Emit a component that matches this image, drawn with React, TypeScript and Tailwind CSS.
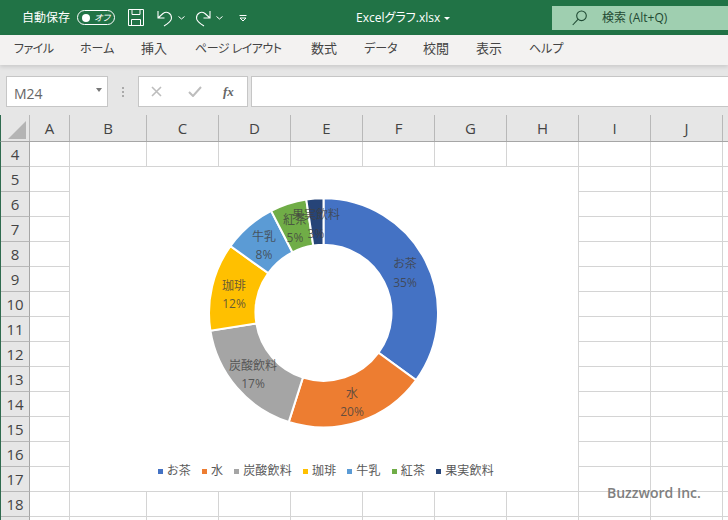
const cols: [string, number][] = [["A",40],["B",77],["C",72],["D",72],["E",72],["F",72],["G",72],["H",72],["I",72],["J",72],["",6]];
const rows = [4,5,6,7,8,9,10,11,12,13,14,15,16,17,18,""];
const menu: [string, string, string][] = [
  ["ファイル","w-[38px]","text-[12px] tracking-[-0.5px]"],
  ["ホーム","w-[33px]","text-[12px]"],
  ["挿入","w-[26px]","text-[13px]"],
  ["ページ レイアウト","w-[88px]","text-[12px] tracking-[-0.5px]"],
  ["数式","w-[25px]","text-[13px]"],
  ["データ","w-[31px]","text-[12px]"],
  ["校閲","w-[25px]","text-[13px]"],
  ["表示","w-[25px]","text-[13px]"],
  ["ヘルプ","w-[32px]","text-[12px]"],
];
const TOP = 167, LEFT = 70;
const slices = [
  { name: "お茶", v: 35, a: 35, c: "#4472c4", lx: 405, ny: 264, py: 283 },
  { name: "水", v: 20, a: 19.9, c: "#ed7d31", lx: 352, ny: 394, py: 412 },
  { name: "炭酸飲料", v: 17, a: 17.6, c: "#a5a5a5", lx: 253, ny: 366, py: 384 },
  { name: "珈琲", v: 12, a: 12.4, c: "#ffc000", lx: 234, ny: 286, py: 304 },
  { name: "牛乳", v: 8, a: 7.55, c: "#5b9bd5", lx: 264, ny: 237, py: 255 },
  { name: "紅茶", v: 5, a: 5.15, c: "#70ad47", lx: 295, ny: 220, py: 238 },
  { name: "果実飲料", v: 3, a: 2.4, c: "#264478", lx: 316, ny: 215, py: 234 },
];
const cx = 323.5 - LEFT, cy = 312.8 - TOP, R = 114.5, r = 68;
function arc(a0: number, a1: number) {
  const p = (rad: number, a: number) => `${(cx + rad * Math.sin(a)).toFixed(2)} ${(cy - rad * Math.cos(a)).toFixed(2)}`;
  const large = a1 - a0 > Math.PI ? 1 : 0;
  return `M${p(R, a0)}A${R} ${R} 0 ${large} 1 ${p(R, a1)}L${p(r, a1)}A${r} ${r} 0 ${large} 0 ${p(r, a0)}Z`;
}
let acc = 0;
const arcs = slices.map((s) => {
  const a0 = (acc / 100) * Math.PI * 2;
  acc += s.a;
  const a1 = (acc / 100) * Math.PI * 2;
  return { ...s, d: arc(a0, a1) };
});
const palt = "[font-feature-settings:'palt']";

export default function App() {
  return (
    <div className={`w-[728px] h-[520px] overflow-hidden relative bg-white flex flex-col [font-family:'Open_Sans','Noto_Sans_CJK_JP',sans-serif] ${palt}`}>
      {/* title bar */}
      <div className="h-[35px] shrink-0 bg-[#217346] flex items-center text-white relative">
        <span className="ml-[22px] w-[48px] text-[12px] whitespace-nowrap">自動保存</span>
        <div className="ml-[7px] w-[38px] h-[15px] rounded-full border border-white flex items-center justify-between pl-[4px] pr-[4px]">
          <span className="w-[8px] h-[8px] rounded-full bg-white" />
          <span className="text-[9px] leading-none italic">オフ</span>
        </div>
        <svg className="ml-[13px]" width="16" height="17" viewBox="0 0 16 17" fill="none" stroke="white" strokeWidth="1">
          <path d="M.5.5h15v16H.5zM4 .5v5h8v-5M3.5 16.5v-6h9v6" />
        </svg>
        <svg className="ml-[12px] mt-[2px]" width="17" height="18" viewBox="0 0 17 18" fill="none" stroke="white" strokeWidth="1.1">
          <path d="M2 1v7h6.5M2 8L7 3.5C11 .5 15.5 3.5 15.5 8 15.5 11 13 13 8 16" />
        </svg>
        <svg className="ml-[5px]" width="7" height="4" viewBox="0 0 7 4" fill="none" stroke="white"><path d="M.5.5l3 2.5 3-2.5" /></svg>
        <svg className="ml-[10px] mt-[2px]" width="17" height="18" viewBox="0 0 17 18" fill="none" stroke="white" strokeWidth="1.1">
          <path d="M15 1v7H8.5M15 8L10 3.5C6 .5 1.5 3.5 1.5 8 1.5 11 4 13 9 16" />
        </svg>
        <svg className="ml-[4px]" width="7" height="4" viewBox="0 0 7 4" fill="none" stroke="white"><path d="M.5.5l3 2.5 3-2.5" /></svg>
        <svg className="ml-[16px]" width="8" height="8" viewBox="0 0 8 8" fill="none" stroke="white"><path d="M.5 1.5h7M1 4l3 3 3-3z" /></svg>
        <span className="absolute left-[356px] top-[9px] text-[12px] leading-[17px] whitespace-nowrap">Excelグラフ.xlsx</span>
        <span className="absolute left-[444px] top-[17px] w-0 h-0 border-x-[3px] border-x-transparent border-t-[3px] border-t-white" />
        <div className="absolute left-[552px] top-[6px] right-0 h-[24px] bg-[#9fcfb0] flex items-center text-[#1f4a33]">
          <svg className="ml-[20px]" width="15" height="16" viewBox="0 0 15 16" fill="none" stroke="#1f4a33" strokeWidth="1.1">
            <circle cx="9.5" cy="5.8" r="4.8" /><path d="M6 9.3L.7 15" />
          </svg>
          <span className="ml-[15px] text-[12px] whitespace-nowrap">検索 (Alt+Q)</span>
        </div>
      </div>
      {/* menu */}
      <div className="h-[30px] shrink-0 bg-[#f3f2f1] flex items-center pl-[14px] gap-x-[28px] text-[#444] pb-[2px] relative z-10 shadow-[0_2px_4px_rgba(0,0,0,0.12)]">
        {menu.map(([t, w, f]) => (
          <span key={t} className={`${w} ${f} whitespace-nowrap`}>{t}</span>
        ))}
      </div>
      {/* formula bar */}
      <div className="h-[50px] shrink-0 bg-[#e6e6e6] flex items-start pt-[11px] pl-[6px]">
        <div className="w-[102px] h-[31px] bg-white border border-[#c6c6c6] flex items-center justify-between pl-[7px] pr-[5px] text-[14px] text-[#666]">
          <span className="mt-[3px]">M24</span>
          <span className="w-0 h-0 mb-[3px] border-x-[3.5px] border-x-transparent border-t-[4px] border-t-[#777]" />
        </div>
        <div className="w-[30px] h-[31px] flex flex-col items-center justify-center gap-[2px]">
          {[0,1,2].map((i) => <span key={i} className="w-[2px] h-[2px] bg-[#aaa]" />)}
        </div>
        <div className="w-[110px] h-[31px] bg-white border border-[#c6c6c6] flex items-center text-[#bbb]">
          <svg className="ml-[12px]" width="11" height="11" viewBox="0 0 11 11" stroke="#bdbdbd" strokeWidth="1.6"><path d="M1 1l9 9M10 1l-9 9" /></svg>
          <svg className="ml-[26px]" width="14" height="11" viewBox="0 0 14 11" fill="none" stroke="#bdbdbd" strokeWidth="2"><path d="M1 6l4 4 8-9" /></svg>
          <span className="ml-[21px] text-[13px] italic font-bold text-[#666] [font-family:'Liberation_Serif',serif]">fx</span>
        </div>
        <div className="ml-[3px] flex-1 h-[31px] bg-white border border-r-0 border-[#c6c6c6]" />
      </div>
      {/* column header */}
      <div className="h-[27px] shrink-0 flex bg-[#e6e6e6] border-b border-[#a6a6a6] border-l border-l-[#2f6b4f]">
        <div className="w-[29px] shrink-0 h-full border-r border-[#b8b8b8] relative">
          <svg className="absolute right-[3px] bottom-[2px]" width="18" height="18" viewBox="0 0 18 18"><path d="M18 0v18H0z" fill="#b4b4b4" /></svg>
        </div>
        {cols.map(([c, w], i) => (
          <div key={i} style={{ width: w }} className="shrink-0 border-r border-[#b8b8b8] flex items-center justify-center text-[15px] text-[#444]">{c}</div>
        ))}
      </div>
      {/* sheet */}
      <div className="relative flex-1 overflow-hidden">
        {rows.map((n) => (
          <div key={n} className="h-[25px] flex border-l border-l-[#2f6b4f]">
            <div className="w-[29px] shrink-0 bg-[#e6e6e6] border-r border-b border-r-[#a6a6a6] border-b-[#b8b8b8] flex items-center justify-center text-[15px] text-[#444]">{n}</div>
            {cols.map(([c, w], i) => (
              <div key={i} style={{ width: w }} className="shrink-0 border-r border-b border-[#d4d4d4]" />
            ))}
          </div>
        ))}
        {/* chart */}
        <div className="absolute left-[70px] top-[25px] w-[508px] h-[324px] bg-white">
          <svg width="508" height="324" className="absolute left-0 top-0">
            {arcs.map((s) => <path key={s.name} d={s.d} fill={s.c} stroke="white" strokeWidth="2" />)}
            {arcs.map((s) => (
              <g key={s.name} textAnchor="middle" fontSize="12" fill="#404040" fillOpacity="0.8">
                <text x={s.lx - LEFT} y={s.ny - TOP + 4}>{s.name}</text>
                <text x={s.lx - LEFT} y={s.py - TOP + 4}>{s.v}%</text>
              </g>
            ))}
          </svg>
          <div className="absolute left-[88px] top-[296px] flex items-center gap-x-[11px] text-[12px] text-[#595959] leading-[16px] tracking-[0.2px]">
            {slices.map((s) => (
              <div key={s.name} className="flex items-center gap-x-[4px]">
                <span style={{ backgroundColor: s.c }} className="w-[5px] h-[5px]" />
                <span className="whitespace-nowrap">{s.name}</span>
              </div>
            ))}
          </div>
        </div>
        <span className="absolute left-[607px] top-[340px] text-[14px] font-semibold text-[#808080]">Buzzword Inc.</span>
      </div>
    </div>
  );
}
